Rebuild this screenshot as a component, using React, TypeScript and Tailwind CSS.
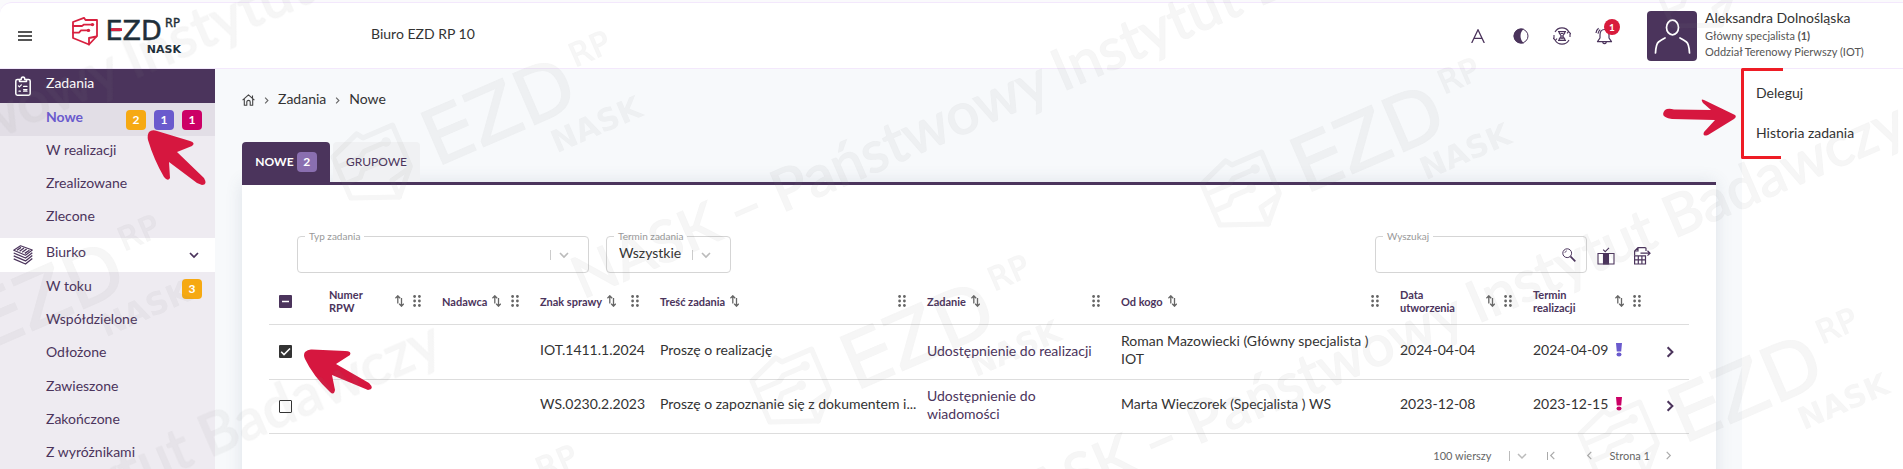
import React from 'react';

const ANGLE = -23.4;

function LogoMark({ paper, ink, dash }: { paper: string; ink: string; dash: string }) {
  return (
    <g>
      <g fill="none" stroke={paper} strokeWidth="1.8" strokeLinejoin="round" strokeLinecap="round">
        <path d="M1 6 L12 1.8 L13.5 4 L25 4 V20 L17 28.5 L1 22 Z" />
        <path d="M17 28.5 V22 L24.5 20.5" />
        <path d="M1 10 H10 L12 8.6 H20" />
        <path d="M1 16.6 H7 L9 14.4 H16" />
      </g>
      <circle cx="20.5" cy="8.6" r="1.7" fill={paper} />
      <circle cx="16.5" cy="14.4" r="1.7" fill={paper} />
      <g fill={ink} fontFamily="DejaVu Sans, sans-serif">
        <text x="33.5" y="24" fontSize="27" stroke={ink} strokeWidth=".5">EZD</text>
        <text x="93" y="11" fontSize="11.5" stroke={ink} strokeWidth=".4">RP</text>
        <text x="109" y="36.5" fontSize="11" fontWeight="700" textAnchor="end">NASK</text>
      </g>
      <rect x="39" y="12.200" width="11" height="2.800" fill={dash} />
    </g>
  );
}

function HeaderLogo() {
  return (
    <svg className="ml-10 h-10 w-[116px] overflow-visible" viewBox="0 0 116 40" role="img" aria-label="EZD RP NASK">
      <LogoMark paper="#d8203f" ink="#1f2f3a" dash="#d8203f" />
    </svg>
  );
}

const textMarks = [[1067, 90], [1482, 322], [138, 78], [18, 541]];
const logoMarks = [[1292, 145], [842, 342], [423, 118], [1670, 395], [-28, 302], [390, 532], [1745, -54]];

function Watermark() {
  return (
    <svg className="pointer-events-none absolute inset-0 z-20 h-full w-full" aria-hidden="true">
      <g opacity="0.075">
        {textMarks.map(([x, y]) => (
          <g key={`${x}-${y}`} transform={`translate(${x} ${y}) rotate(${ANGLE})`} fill="#808080" stroke="#808080" fontFamily="Lato, sans-serif" fontSize="58" fontWeight="500">
            <text x="-15" y="0" textAnchor="end">NASK – Państwowy</text>
            <text x="-5" y="0">Instytut Badawczy</text>
          </g>
        ))}
        {logoMarks.map(([x, y]) => (
          <g key={`${x}-${y}`} transform={`translate(${x} ${y}) rotate(${ANGLE}) scale(2.8) translate(-36 -6)`}>
            <LogoMark paper="#808080" ink="#808080" dash="#808080" />
          </g>
        ))}
      </g>
    </svg>
  );
}

const badgeColors = {
  amber: 'bg-[#f6a912]',
  violet: 'bg-[#6a5acd]',
  pink: 'bg-[#cc0066]',
  lilac: 'bg-[#8a6fb0]',
};

function Badge({ color, children }: { color: keyof typeof badgeColors; children: React.ReactNode }) {
  return (
    <span className={`flex h-5 w-5 items-center justify-center rounded text-xs leading-none font-bold text-white ${badgeColors[color]}`}>
      {children}
    </span>
  );
}

type Item = { label: string; badges?: [keyof typeof badgeColors, string][]; active?: boolean };

function NavItem({ label, badges, active }: Item) {
  return (
    <li className={active ? 'bg-[#e2dee6]' : ''}>
      <a href="#" className={`flex h-full items-center gap-2 pr-[13px] pl-[46px] ${active ? 'font-bold text-[#6a5acd]' : 'text-[#4b345c]'}`}>
        <span className="flex-1 pb-[6px]">{label}</span>
        {badges?.map(([c, n], i) => <Badge key={i} color={c}>{n}</Badge>)}
      </a>
    </li>
  );
}

const tasks: Item[] = [
  { label: 'Nowe', active: true, badges: [['amber', '2'], ['violet', '1'], ['pink', '1']] },
  { label: 'W realizacji' },
  { label: 'Zrealizowane' },
  { label: 'Zlecone' },
];
const desk: Item[] = [
  { label: 'W toku', badges: [['amber', '3']] },
  { label: 'Współdzielone' },
  { label: 'Odłożone' },
  { label: 'Zawieszone' },
  { label: 'Zakończone' },
  { label: 'Z wyróżnikami' },
];

function ClipboardIcon() {
  return (
    <svg className="ml-[15px] h-5 w-4" viewBox="0 0 16 20" fill="none" stroke="#fff" strokeWidth="1.5" strokeLinecap="round" strokeLinejoin="round">
      <path d="M4.2 3.5H2.4Q.8 3.5.8 5V17.6Q.8 19.2 2.4 19.2H13.6Q15.2 19.2 15.2 17.6V5Q15.2 3.5 13.6 3.5H11.8" />
      <path d="M4.5 5.5V3.4H6.2Q6.2 1 8 1T9.8 3.4H11.5V5.5Z" />
      <path d="M3.4 9.9l1 1 2-2M8.6 10.4H12M4 15.2H5.4M8.6 15.2H12M8.6 13.6H12" strokeWidth="1.2" />
    </svg>
  );
}

function StackIcon() {
  return (
    <svg className="ml-[13px] h-5 w-5" viewBox="0 0 20 20" fill="none" stroke="#4b345c" strokeWidth="1.1" strokeLinejoin="round">
      <path d="M7.5.7L19.3 5 12.5 10.2.7 5.3Z" />
      <path d="M4 5.2L8 2.4M6.6 6.2L11 3M9.2 7.2L13.6 4M11.8 8.4L16.4 5.2" strokeWidth="1.4" />
      <path d="M.7 8L12.5 13 19.3 7.8M.7 10.8L12.5 15.9 19.3 10.6M.7 13.8L12.5 19 19.3 13.4" strokeWidth="1.3" />
    </svg>
  );
}

function Chevron({ className, dir = 'down', w = 1.6 }: { className?: string; dir?: 'down' | 'left' | 'right'; w?: number }) {
  const d = { down: 'M1 3L5 7 9 3', left: 'M7 1L3 5 7 9', right: 'M3 1L7 5 3 9' }[dir];
  return (
    <svg className={className} viewBox="0 0 10 10" fill="none" stroke="currentColor" strokeWidth={w}>
      <path d={d} />
    </svg>
  );
}

function Sidebar() {
  return (
    <nav className="w-[215px] shrink-0 bg-[#eeebf1]">
      <a href="#" className="flex h-[34px] items-center bg-[#4b345c] text-white">
        <ClipboardIcon />
        <span className="ml-[15px] pb-[6px]">Zadania</span>
      </a>
      <ul className="mb-[2px] grid h-[133px] grid-rows-4">
        {tasks.map((t) => <NavItem key={t.label} {...t} />)}
      </ul>
      <button className="flex h-[34px] w-full items-center bg-white text-left text-[#4b345c]">
        <StackIcon />
        <span className="ml-[13px] flex-1 pb-[6px]">Biurko</span>
        <Chevron className="mr-4 h-[10px] w-[10px]" w={1.7} />
      </button>
      <ul className="grid h-[200px] grid-rows-6">
        {desk.map((t) => <NavItem key={t.label} {...t} />)}
      </ul>
    </nav>
  );
}

function Header() {
  return (
    <header className="mt-[2px] flex h-[67px] shrink-0 items-center rounded-tl-xl border-y border-[#f3e8fc] bg-white">
      <button aria-label="Menu" className="ml-[18px] flex w-[14px] flex-col gap-[2px]">
        <span className="h-[2px] bg-[#555]" />
        <span className="h-[2px] bg-[#555]" />
        <span className="h-[2px] bg-[#555]" />
      </button>
      <HeaderLogo />
      <span className="mb-1 ml-[183px] flex-1">Biuro EZD RP 10</span>
      <div className="flex items-center text-[#4b345c]">
        <button aria-label="Rozmiar tekstu" className="mr-7">
          <svg className="h-[14px] w-[14px]" viewBox="0 0 14 14" fill="none" stroke="currentColor" strokeWidth="1.3">
            <path d="M.7 14L7 .8 13.3 14M3 9.4H11" />
          </svg>
        </button>
        <button aria-label="Kontrast" className="mr-6">
          <svg className="h-4 w-4" viewBox="0 0 16 16">
            <circle cx="8" cy="8" r="7" fill="none" stroke="currentColor" strokeWidth="1" />
            <path d="M8 .6A7.4 7.4 0 0 0 8 15.4H11Q7.500 12.5 7.500 8T11 .8Z" fill="currentColor" />
          </svg>
        </button>
        <button aria-label="Czas sesji" className="mr-6">
          <svg className="h-[18px] w-[18px]" viewBox="0 0 18 18" fill="none" stroke="currentColor" strokeWidth="1.1">
            <path d="M2 5A8 8 0 0 1 16 5M16 13A8 8 0 0 1 2 13M1 8V11.5M17 6V10M0 11L2.5 13.5 4 11.5M18 7L15.6 4.5 14 6.4" />
            <path d="M5 4.6H13M5 13.4H13M6.3 4.6V6L8.3 9 6.3 12V13.4M11.7 4.6V6L9.7 9 11.7 12V13.4" strokeWidth="1.2" />
            <path d="M7.5 6.5H10.5M7.5 12L9 10.5 10.5 12" />
          </svg>
        </button>
        <button aria-label="Powiadomienia" className="relative mr-[34px]">
          <svg className="h-[18px] w-[18px]" viewBox="0 0 18 18" fill="none" stroke="currentColor" strokeWidth="1.2" strokeLinejoin="round">
            <path d="M9.5 2.5C6.3 2.5 5 5 5 8V11L2.5 14.7H16.5L14 11V8C14 5 12.7 2.5 9.5 2.5ZM7.5 15.4Q9.5 18 11.5 15.4" />
            <path d="M1 6Q1.2 3 3.6 1.2M3 6.6Q3.2 4.4 5.2 2.6" />
          </svg>
          <span className="absolute -top-2 left-[9px] flex h-4 w-4 items-center justify-center rounded-full bg-[#d81b3c] text-[10px] font-bold text-white">1</span>
        </button>
      </div>
      <svg className="h-[50px] w-[50px] rounded bg-[#4b345c]" viewBox="0 0 50 50" fill="none" stroke="#fff" strokeWidth="1.7" strokeLinecap="round">
        <ellipse cx="25.5" cy="16.5" rx="6" ry="7.3" />
        <path d="M8.5 42Q9 33 11.5 31T18 27M42.5 42Q42 33 39.5 31T33 27" />
      </svg>
      <div className="mb-1 ml-2 w-[198px] whitespace-nowrap">
        <div className="leading-5">Aleksandra Dolnośląska</div>
        <div className="text-[11px] text-[#555]">Główny specjalista <b>(1)</b></div>
        <div className="text-[11px] text-[#555]">Oddział Terenowy Pierwszy (IOT)</div>
      </div>
    </header>
  );
}

function SortIcon() {
  return (
    <button aria-label="Sortuj" className="shrink-0">
      <svg className="h-3 w-[9px]" viewBox="0 0 9 12" fill="none" stroke="#666" strokeWidth="1.3">
        <path d="M2.8 8.5V1M.4 3.2L2.8.8 5.2 3.2M6.5 3V11M4.2 8.8L6.5 11.2 8.8 8.8" />
      </svg>
    </button>
  );
}

function Dots() {
  return (
    <svg className="h-3 w-2 shrink-0" viewBox="0 0 8 12" fill="#666">
      {[1.5, 6, 10.5].map((y) => (
        <g key={y}><circle cx="1.6" cy={y} r="1.4" /><circle cx="6.4" cy={y} r="1.4" /></g>
      ))}
    </svg>
  );
}

function Checkbox({ state, label }: { state: 'mixed' | 'on' | 'off'; label: string }) {
  const look = {
    mixed: 'bg-[#4b345c]',
    on: 'bg-[#333]',
    off: 'border-[1px] border-[#333] bg-white',
  }[state];
  return (
    <span className="ml-[10px] grid h-[13px] w-[13px]">
      <input type="checkbox" aria-label={label} defaultChecked={state === 'on'} className={`col-start-1 row-start-1 h-[13px] w-[13px] appearance-none rounded-[1px] ${look}`} />
      {state !== 'off' && (
        <svg className="pointer-events-none col-start-1 row-start-1 h-[13px] w-[13px]" viewBox="0 0 13 13" fill="none" stroke="#fff" strokeWidth="1.5">
          <path d={state === 'mixed' ? 'M3 6.5H10' : 'M2.2 6.8L5 9.6 11 3.4'} />
        </svg>
      )}
    </span>
  );
}

function SelectField({ id, label, value, className, end }: { id: string; label: string; value: string; className: string; end: string }) {
  return (
    <fieldset className={`flex h-[43px] min-w-0 rounded border border-[#d5d5d5] ${className}`}>
      <legend className="ml-[7px] h-[13px] px-1 text-[10px] leading-[13px] text-[#999]"><label htmlFor={id}>{label}</label></legend>
      <div className="-mt-[6px] flex h-9 w-full items-center">
        <select id={id} className="h-8 min-w-0 flex-1 appearance-none bg-transparent pb-1 pl-3 outline-none">
          <option>{value}</option>
        </select>
        <span className="h-[10px] w-px bg-[#ccc]" />
        <Chevron className={`ml-2 h-[10px] w-[10px] text-[#bbb] ${end}`} />
      </div>
    </fieldset>
  );
}

function Filters() {
  return (
    <div className="flex h-[43px] items-start pr-[38px] pl-7">
      <SelectField id="typ" label="Typ zadania" value="" className="w-[292px]" end="mr-[19px]" />
      <SelectField id="termin" label="Termin zadania" value="Wszystkie" className="ml-[17px] w-[125px]" end="mr-[19px]" />
      <fieldset className="ml-auto flex h-[43px] w-[212px] min-w-0 rounded border border-[#d5d5d5]">
        <legend className="ml-[7px] h-[13px] px-1 text-[10px] leading-[13px] text-[#999]"><label htmlFor="szukaj">Wyszukaj</label></legend>
        <div className="-mt-[6px] flex h-9 w-full items-center">
          <input id="szukaj" className="h-8 min-w-0 flex-1 bg-transparent pl-3 outline-none" />
          <svg className="mr-[10px] h-[14px] w-[14px]" viewBox="0 0 14 14" fill="none" stroke="#4b345c">
            <circle cx="5.2" cy="5.2" r="4.4" strokeWidth="1" />
            <path d="M2.8 5A2.5 2.5 0 0 1 5 2.8" strokeWidth=".7" />
            <path d="M8.4 8.4L13.3 13.3" strokeWidth="1.7" />
          </svg>
        </div>
      </fieldset>
      <button aria-label="Kolumny" className="mt-[17px] ml-[10px]">
        <svg className="h-[18px] w-[18px]" viewBox="0 0 18 18" fill="none" stroke="#4b345c" strokeWidth="1.1">
          <path d="M1 6.5H17V17H1ZM6.2 2.6L8.2 4.6 12 .8" />
          <path d="M6.5 6.5H11.5V17H6.5Z" fill="#4b345c" />
        </svg>
      </button>
      <button aria-label="Eksport" className="mt-[17px] ml-[18px]">
        <svg className="h-[18px] w-[18px]" viewBox="0 0 18 18" fill="none" stroke="#4b345c" strokeWidth="1.2">
          <path d="M13 4V1.6Q13 .6 12 .6H5L1.6 4V8.5M1.6 4H5V.6" />
          <path d="M7.5 6.2H17M14.5 3.8L17 6.2 14.5 8.6" />
          <path d="M1.6 8.9H12.5V17H1.6ZM1.6 12.8H12.5M5.3 8.9V17M8.9 8.9V17" />
        </svg>
      </button>
    </div>
  );
}

const columns: { label: string; wrap?: boolean }[] = [
  { label: 'Numer RPW', wrap: true },
  { label: 'Nadawca' },
  { label: 'Znak sprawy' },
  { label: 'Treść zadania' },
  { label: 'Zadanie' },
  { label: 'Od kogo' },
  { label: 'Data utworzenia', wrap: true },
  { label: 'Termin realizacji', wrap: true },
];

const rows = [
  { on: true, h: 'h-[55px]', sign: 'IOT.1411.1.2024', text: 'Proszę o realizację', task: 'Udostępnienie do realizacji', who: 'Roman Mazowiecki (Główny specjalista ) IOT', made: '2024-04-04', due: '2024-04-09', flag: '#6a5acd' },
  { on: false, h: 'h-[54px]', sign: 'WS.0230.2.2023', text: 'Proszę o zapoznanie się z dokumentem i...', task: 'Udostępnienie do wiadomości', who: 'Marta Wieczorek (Specjalista ) WS', made: '2023-12-08', due: '2023-12-15', flag: '#cc0066' },
];

function TaskTable() {
  return (
    <table className="mt-[6px] w-full table-fixed border-collapse">
      <colgroup>
        <col className="w-[60px]" />
        <col className="w-[113px]" />
        <col className="w-[98px]" />
        <col className="w-[120px]" />
        <col />
        <col className="w-[194px]" />
        <col className="w-[279px]" />
        <col className="w-[133px]" />
        <col className="w-[129px]" />
        <col className="w-[27px]" />
      </colgroup>
      <thead>
        <tr className="h-[45px] border-b border-[#ddd] text-left text-[11px] leading-[13px] text-[#4b345c]">
          <th><Checkbox state="mixed" label="Zaznacz wszystkie" /></th>
          {columns.map((c) => (
            <th key={c.label} className="pr-[21px] font-bold">
              <div className="flex items-center">
                {c.wrap
                  ? <span className="w-0 flex-1"><span className="block w-10">{c.label}</span></span>
                  : <span className="mr-[5px]">{c.label}</span>}
                <SortIcon />
                <span className={c.wrap ? 'ml-[9px]' : 'ml-auto'}><Dots /></span>
              </div>
            </th>
          ))}
          <th><span className="sr-only">Szczegóły</span></th>
        </tr>
      </thead>
      <tbody>
        {rows.map((r) => (
          <tr key={r.sign} className={`${r.h} border-b border-[#ddd] leading-[18px]`}>
            <td><Checkbox state={r.on ? 'on' : 'off'} label={`Zaznacz ${r.sign}`} /></td>
            <td />
            <td />
            <td className="pb-1 whitespace-nowrap">{r.sign}</td>
            <td className="pb-1 whitespace-nowrap">{r.text}</td>
            <td className="pr-5 pb-[2px] text-[#4b345c]">{r.task}</td>
            <td className="pr-7 pb-1">{r.who}</td>
            <td className="pb-1">{r.made}</td>
            <td className="pb-1">
              <div className="flex items-center gap-2">
                {r.due}
                <svg className="h-[14px] w-[6px]" viewBox="0 0 6 14" fill={r.flag}><path d="M0 0H6L5.2 8.5H.8Z" /><ellipse cx="3" cy="11.6" rx="2.5" ry="2" /></svg>
              </div>
            </td>
            <td>
              <button aria-label="Otwórz" className="block text-[#4b345c]"><Chevron dir="right" className="ml-[2px] h-3 w-3" w={1.7} /></button>
            </td>
          </tr>
        ))}
      </tbody>
    </table>
  );
}

function Pager() {
  return (
    <div className="mt-3 flex h-5 items-center justify-end pr-4 text-[11px] text-[#666]">
      <span>100 wierszy</span>
      <span className="ml-[17px] h-[10px] w-px bg-[#bbb]" />
      <button aria-label="Liczba wierszy" className="ml-[7px] text-[#bbb]"><Chevron className="h-[10px] w-[10px]" w={1.5} /></button>
      <button aria-label="Pierwsza strona" className="ml-5 flex items-center text-[#aaa]">
        <span className="h-2 w-px bg-[#aaa]" /><Chevron dir="left" className="h-[9px] w-[9px]" w={1.3} />
      </button>
      <button aria-label="Poprzednia strona" className="ml-7 text-[#aaa]"><Chevron dir="left" className="h-[9px] w-[9px]" w={1.3} /></button>
      <span className="ml-4">Strona 1</span>
      <button aria-label="Następna strona" className="ml-[14px] text-[#aaa]"><Chevron dir="right" className="h-[9px] w-[9px]" w={1.3} /></button>
    </div>
  );
}

function Main() {
  return (
    <main className="min-w-0 flex-1 bg-[#f7f9fb] pr-[26px] pl-[27px]">
      <nav className="flex h-[73px] items-center pb-[11px]">
        <a href="#" aria-label="Start">
          <svg className="h-3 w-[13px]" viewBox="0 0 13 12" fill="none" stroke="#444" strokeWidth="1.1" strokeLinejoin="round">
            <path d="M.6 6.2L6.5.8 12.4 6.2M2.3 5V11.3H4.8V8Q4.8 6.4 6.5 6.4T8.2 8V11.3H10.700V5M10.5 4V1.5" />
          </svg>
        </a>
        <Chevron dir="right" className="ml-2 h-[7px] w-[7px] text-[#666]" />
        <a href="#" className="ml-2 pb-[2px]">Zadania</a>
        <Chevron dir="right" className="ml-2 h-[7px] w-[7px] text-[#666]" />
        <a href="#" className="ml-2 pb-[2px]">Nowe</a>
      </nav>
      <div role="tablist" className="flex h-10 gap-[3px] text-xs">
        <button role="tab" aria-selected="true" className="flex w-[88px] items-center justify-center gap-[3px] rounded-t bg-[#4b345c] font-bold text-white">
          NOWE <Badge color="lilac">2</Badge>
        </button>
        <button role="tab" aria-selected="false" className="flex w-[87px] items-center justify-center rounded-t bg-[#f0f1f3] text-[#4b345c]">GRUPOWE</button>
      </div>
      <section className="h-[400px] border-t-3 border-[#4b345c] bg-white px-[27px] pt-[45px] shadow-[0_0_16px_rgba(70,90,120,0.14)]">
        <Filters />
        <TaskTable />
        <Pager />
      </section>
    </main>
  );
}

function ActionsPanel() {
  return (
    <aside className="relative w-[161px] shrink-0 bg-white">
      <ul className="pt-1 pl-[14px] text-[#333]">
        <li><a href="#" className="flex h-10 items-center">Deleguj</a></li>
        <li><a href="#" className="flex h-10 items-center">Historia zadania</a></li>
      </ul>
      <svg className="absolute -top-1 -left-20 h-24 w-[124px]" viewBox="0 0 124 96" aria-hidden="true">
        <path d="M121 4.5H80.5V92.5H119" fill="none" stroke="#ee1c25" strokeWidth="3" strokeLinejoin="round" />
        <path d="M3 45Q6 43 12 44.5L49 45 41 38Q38 33 42 35L73 50Q75 52 72 54L46 70Q40 72 42 67L53 55 10 54Q-3 52 3 45Z" fill="#d6173f" />
      </svg>
    </aside>
  );
}

export default function App() {
  return (
    <div className="relative flex h-screen flex-col overflow-hidden bg-[#fafafc] font-['Lato',sans-serif] text-sm leading-4 text-[#333]">
      <Header />
      <div className="flex min-h-0 flex-1">
        <Sidebar />
        <Main />
        <ActionsPanel />
      </div>
      <svg className="pointer-events-none absolute top-[128px] left-[146px] z-10 h-[60px] w-[62px]" viewBox="0 0 62 60" aria-hidden="true">
        <path d="M3 4Q6 1 11 3L44 13Q50 15 46 18L31 24 58 50Q62 57 56 57L51 55 23 34 24 50Q22 54 18 49Q8 32 2 12Q1 7 3 4Z" fill="#d6173f" />
      </svg>
      <svg className="pointer-events-none absolute top-[348px] left-[303px] z-10 h-[48px] w-[72px]" viewBox="0 0 72 48" aria-hidden="true">
        <path d="M2 4Q5 1 9 1.5L42 3Q49 3 47 7L33 16 66 35Q72 41 65 42L29 27 32 42Q31 48 27 44Q10 28 2 11Q0 7 2 4Z" fill="#d6173f" />
      </svg>
      <Watermark />
    </div>
  );
}
